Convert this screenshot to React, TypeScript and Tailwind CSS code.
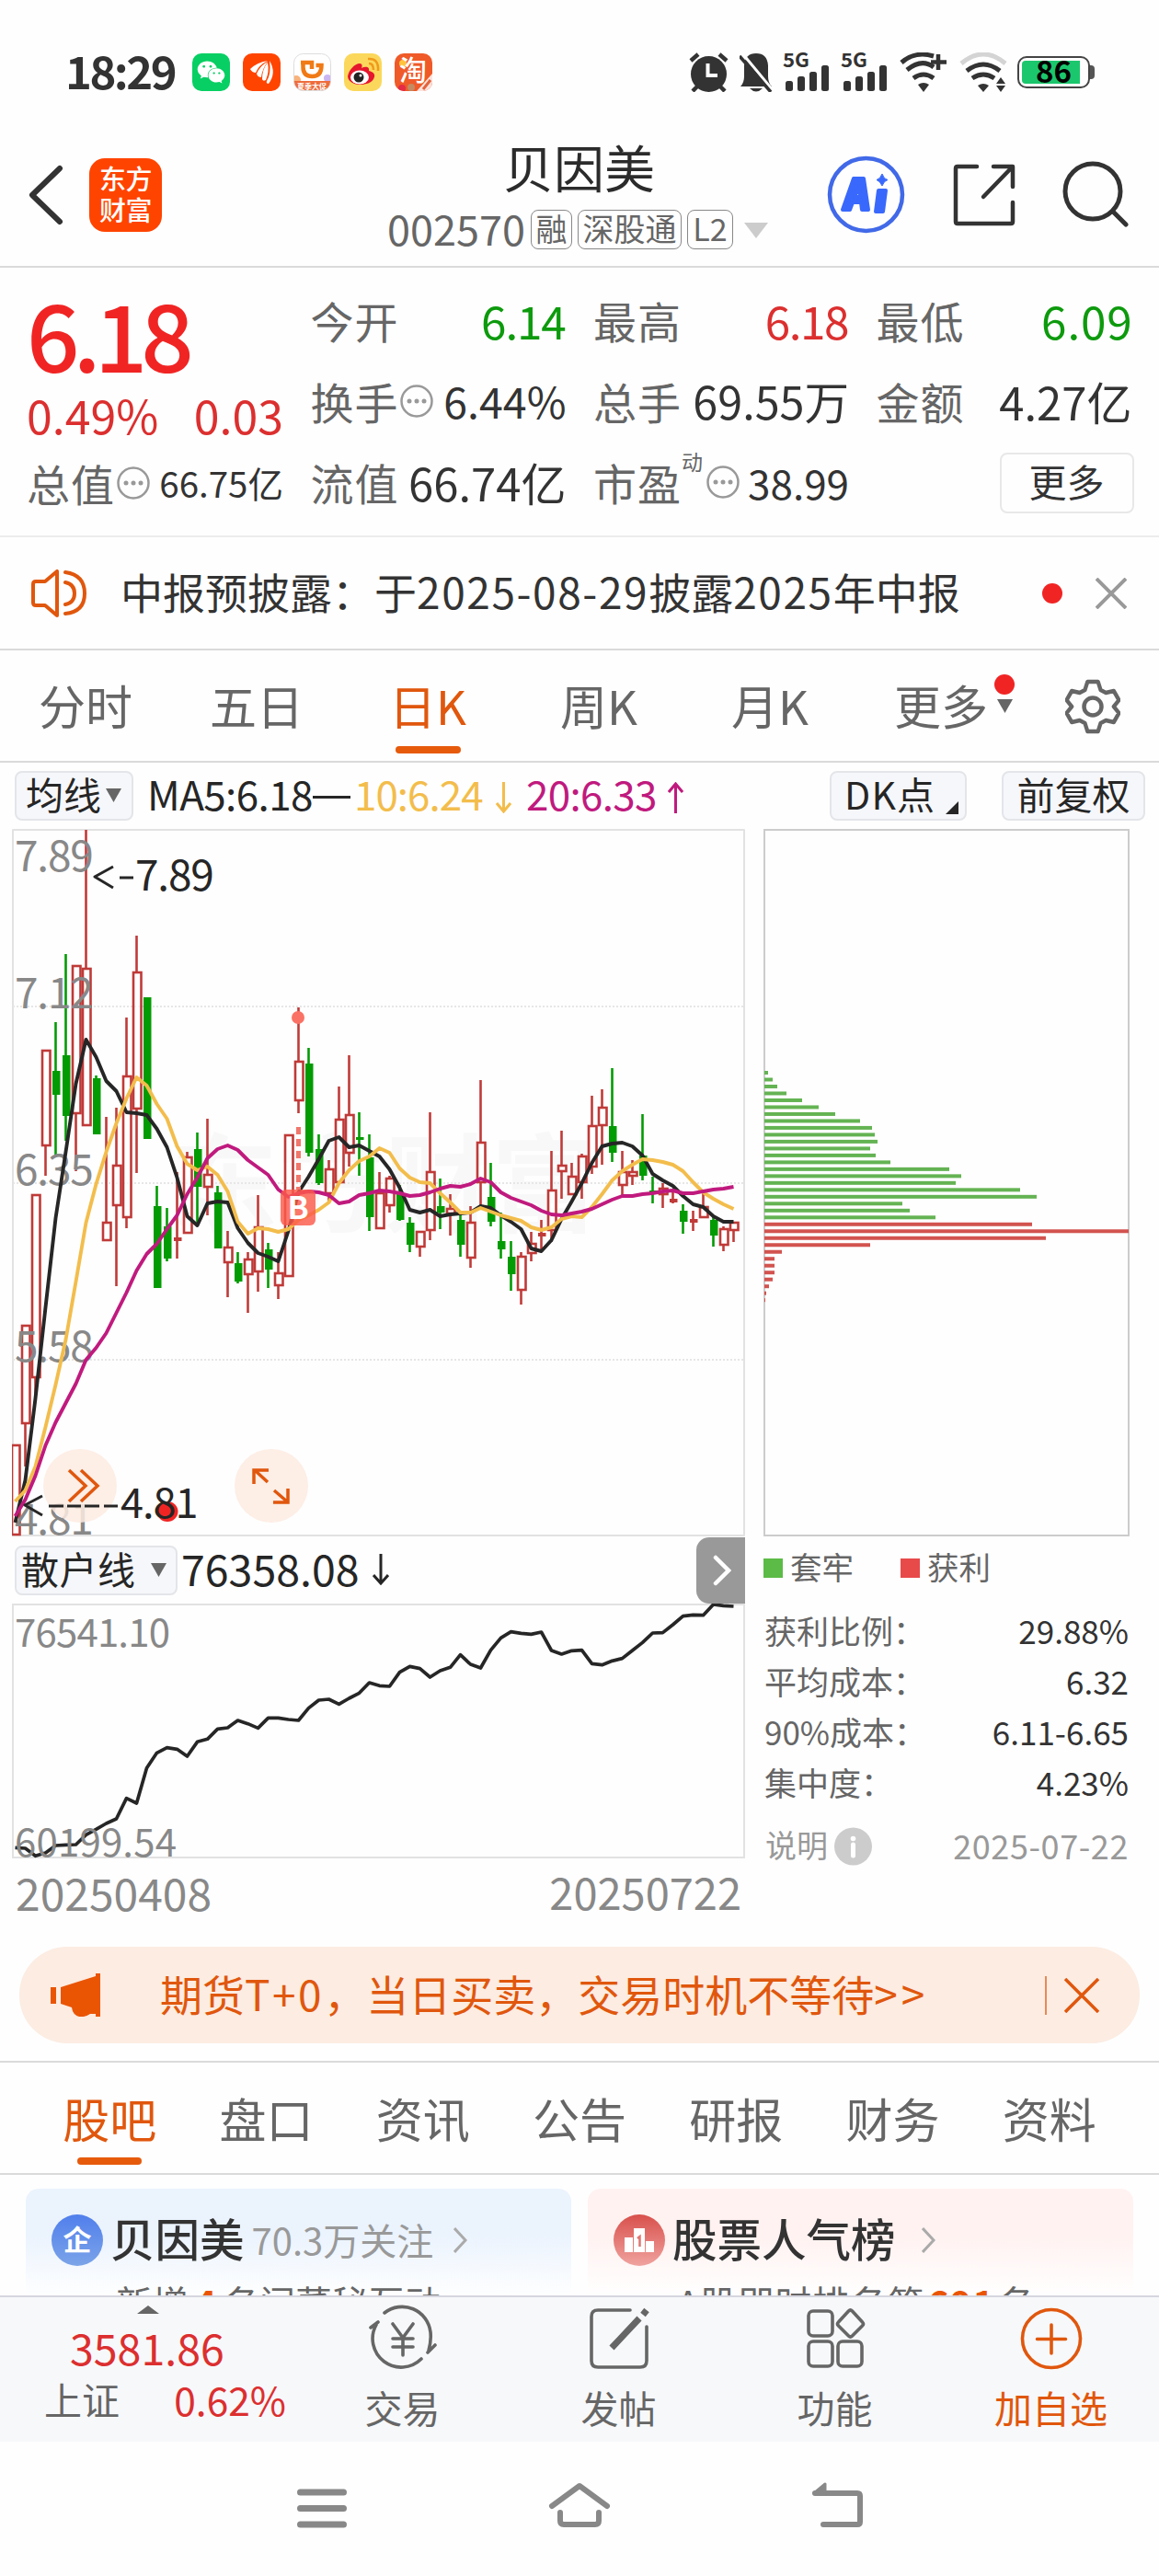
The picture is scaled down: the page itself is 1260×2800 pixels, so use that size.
import React from "react";
import { FaWeixin } from "react-icons/fa";

const UP = "#bf3a38";
const DOWN = "#039b03";

// [high, body top, body bottom, low, rising]
const candles: [number, number, number, number, number][] = [
    [1570, 1570, 1669, 1669, 1],
    [1440, 1440, 1548, 1594, 1],
    [1298, 1298, 1498, 1520, 1],
    [1141, 1141, 1246, 1278, 1],
    [1111, 1164, 1190, 1255, 0],
    [1037, 1147, 1213, 1240, 0],
    [1049, 1049, 1211, 1273, 1],
    [902, 1052, 1224, 1224, 1],
    [1169, 1172, 1233, 1233, 0],
    [1214, 1328, 1349, 1349, 1],
    [1204, 1266, 1311, 1398, 1],
    [1106, 1169, 1324, 1335, 1],
    [1017, 1056, 1206, 1275, 1],
    [1084, 1084, 1238, 1238, 0],
    [1289, 1311, 1400, 1400, 0],
    [1313, 1333, 1368, 1371, 0],
    [1274, 1345, 1349, 1368, 1],
    [1252, 1257, 1341, 1341, 1],
    [1231, 1249, 1290, 1329, 0],
    [1216, 1276, 1291, 1321, 1],
    [1289, 1296, 1357, 1357, 0],
    [1338, 1355, 1373, 1410, 1],
    [1361, 1373, 1393, 1395, 0],
    [1361, 1368, 1386, 1427, 1],
    [1299, 1333, 1383, 1404, 1],
    [1351, 1358, 1380, 1400, 0],
    [1361, 1383, 1398, 1412, 1],
    [1233, 1233, 1388, 1388, 1],
    [1095, 1153, 1197, 1210, 1],
    [1139, 1156, 1253, 1257, 0],
    [1233, 1249, 1286, 1288, 0],
    [1261, 1270, 1298, 1306, 1],
    [1181, 1216, 1286, 1286, 1],
    [1147, 1211, 1254, 1268, 1],
    [1209, 1236, 1239, 1278, 0],
    [1233, 1258, 1323, 1338, 0],
    [1274, 1296, 1336, 1336, 1],
    [1278, 1280, 1311, 1318, 1],
    [1288, 1298, 1326, 1327, 0],
    [1323, 1329, 1353, 1361, 0],
    [1338, 1338, 1356, 1366, 1],
    [1209, 1273, 1338, 1348, 1],
    [1281, 1311, 1318, 1336, 0],
    [1298, 1313, 1320, 1343, 1],
    [1318, 1326, 1353, 1366, 0],
    [1311, 1328, 1368, 1378, 1],
    [1174, 1241, 1286, 1311, 1],
    [1264, 1301, 1328, 1333, 0],
    [1318, 1349, 1358, 1368, 0],
    [1349, 1366, 1385, 1403, 0],
    [1361, 1365, 1403, 1418, 1],
    [1339, 1351, 1363, 1371, 1],
    [1326, 1340, 1344, 1358, 1],
    [1251, 1293, 1338, 1350, 1],
    [1229, 1266, 1274, 1303, 1],
    [1264, 1278, 1299, 1299, 1],
    [1254, 1256, 1286, 1303, 1],
    [1191, 1223, 1269, 1276, 1],
    [1184, 1203, 1224, 1266, 1],
    [1161, 1224, 1253, 1263, 0],
    [1251, 1273, 1289, 1300, 1],
    [1261, 1273, 1279, 1288, 1],
    [1211, 1256, 1278, 1283, 0],
    [1279, 1294, 1297, 1308, 0],
    [1286, 1291, 1299, 1313, 1],
    [1295, 1303, 1307, 1308, 1],
    [1309, 1316, 1328, 1341, 0],
    [1316, 1325, 1329, 1338, 1],
    [1296, 1311, 1324, 1324, 1],
    [1322, 1326, 1343, 1355, 0],
    [1333, 1335, 1354, 1360, 1],
    [1328, 1328, 1338, 1350, 1],
];

const ma5 = [
    1655, 1609, 1520, 1421, 1324, 1252, 1178, 1130, 1149, 1175, 1186, 1209, 1210, 1212, 1227, 1247, 1280, 1322,
    1332, 1308, 1306, 1307, 1335, 1351, 1362, 1366, 1371, 1338, 1296, 1279, 1260, 1240, 1236, 1247, 1245, 1251,
    1257, 1271, 1291, 1315, 1318, 1315, 1322, 1320, 1319, 1318, 1311, 1313, 1321, 1328, 1336, 1357, 1360, 1348,
    1325, 1306, 1286, 1264, 1246, 1243, 1242, 1246, 1256, 1276, 1283, 1289, 1300, 1309, 1312, 1322, 1328, 1328,
];

const ma10 = [
    1632, 1620, 1594, 1551, 1505, 1456, 1393, 1329, 1287, 1252, 1221, 1194, 1171, 1180, 1200, 1216, 1246, 1265,
    1272, 1268, 1277, 1295, 1328, 1341, 1335, 1336, 1339, 1336, 1326, 1321, 1315, 1307, 1286, 1272, 1262, 1257,
    1248, 1253, 1270, 1280, 1285, 1286, 1297, 1307, 1318, 1318, 1313, 1317, 1321, 1324, 1327, 1334, 1337, 1334,
    1325, 1322, 1323, 1312, 1298, 1283, 1273, 1266, 1260, 1261, 1263, 1266, 1273, 1285, 1296, 1303, 1309, 1314,
];

const ma20 = [
    1648, 1630, 1604, 1571, 1546, 1525, 1504, 1478, 1465, 1449, 1427, 1405, 1381, 1363, 1352, 1336, 1321, 1298,
    1280, 1259, 1249, 1245, 1250, 1261, 1269, 1277, 1293, 1301, 1297, 1295, 1296, 1299, 1308, 1306, 1299, 1297,
    1294, 1295, 1297, 1300, 1299, 1296, 1292, 1289, 1290, 1287, 1281, 1285, 1296, 1302, 1306, 1310, 1316, 1320,
    1321, 1319, 1317, 1314, 1309, 1304, 1300, 1300, 1298, 1297, 1295, 1294, 1297, 1297, 1295, 1293, 1292, 1290,
];

const retail = [
    796, 798, 823, 813, 789, 787, 786, 754, 736, 717, 702, 635, 651, 536, 487, 470, 475, 498, 451, 442, 409, 405,
    381, 392, 406, 373, 373, 378, 381, 341, 315, 312, 328, 309, 292, 258, 268, 270, 224, 205, 212, 240, 219, 208,
    167, 198, 210, 152, 112, 92, 97, 100, 93, 153, 165, 154, 152, 196, 200, 187, 179, 153, 127, 96, 95, 69, 41, 37,
    38, 3, 7, 9,
];

const chips = [
    4, 9, 14, 24, 41, 59, 77, 104, 117, 120, 123, 115, 121, 137, 201, 214, 208, 278, 296, 150, 158, 186, 291, 396,
    306, 115, 19, 11, 11, 11, 9, 5, 2, 1,
];

const px = (i: number) => 16.5 + i * 11;
const line = (ys: number[]) => ys.map((y, i) => `${px(i)},${y}`).join(" ");

const Triangle = ({ className }: { className?: string }) => (
    <svg viewBox="0 0 16 14" preserveAspectRatio="none" className={className} fill="currentColor">
        <path d="M0 0h16L8 14z" />
    </svg>
);

const Signal = () => (
    <svg width="50" height="42" viewBox="0 0 50 42" className="mr-[13px] overflow-visible" fill="#333">
        <text x="-1" y="16" fontSize="21" fontWeight="700" textLength="29" lengthAdjust="spacingAndGlyphs">
            5G
        </text>
        <rect x="2" y="31" width="8" height="11" rx="2.5" />
        <rect x="15" y="26" width="8" height="16" rx="2.5" />
        <rect x="28" y="21" width="8" height="21" rx="2.5" />
        <rect x="41" y="14" width="8" height="28" rx="2.5" />
    </svg>
);

const StatusBar = () => (
    <div className="flex h-[156px] items-center pr-[70px] pl-[71px]">
        <span className="w-[138px] pb-[5px] text-[49px] leading-none font-bold tracking-[-2.500px] text-[#333]">18:29</span>
        <div className="flex gap-[13.9px]">
            <div className="flex size-[41px] items-center justify-center rounded-[10px] bg-[#07cf63] text-white">
                <FaWeixin size={31} />
            </div>
            <div className="flex size-[41px] items-center justify-center rounded-[10px] bg-[#ff4400]">
                <svg width="41" height="41" viewBox="0 0 41 41" fill="#fff">
                    <path d="M8 17q7-7 19-9-10 5-13 13-4 0-6-4z" />
                    <path d="M15 22q4-9 12-13-6 8-7 17-4 0-5-4z" />
                    <path d="M21 28q0-11 6-18 2 10-2 19-3 2-4-1z" />
                    <path d="M29 8q8 13-1 25-3 0-2-3 5-8 3-22z" />
                </svg>
            </div>
            <svg width="41" height="41" viewBox="0 0 41 41">
                <defs>
                    <clipPath id="didi">
                        <rect x="0.5" y="0.5" width="40" height="40" rx="10" />
                    </clipPath>
                </defs>
                <g clipPath="url(#didi)">
                    <rect width="41" height="41" fill="#fff" />
                    <circle cx="3" cy="29" r="5" fill="#f9b27a" />
                    <circle cx="37" cy="27" r="4" fill="#c9b6f2" />
                    <rect y="30" width="41" height="11" fill="#ee6c3c" />
                    <path d="M8 10h12v7M10.500 10v5q0 10 10 10t10-12h-6" fill="none" stroke="#f07a16" strokeWidth="4.500" />
                    <text x="4" y="39" fontSize="8" fontWeight="700" fill="#fff">
                        夏季大促
                    </text>
                </g>
                <rect x="0.5" y="0.500" width="40" height="40" rx="10" fill="none" stroke="#ddd" />
            </svg>
            <svg width="41" height="41" viewBox="0 0 41 41">
                <rect width="41" height="41" rx="10" fill="#fbd85c" />
                <path d="M4 25C5 18 12 11 17 11c3 0 3 3 2 5 4-2 9-2 8 3 5 1 8 4 5 9-4 8-27 9-28-3z" fill="#e6162d" />
                <ellipse cx="17" cy="26" rx="10" ry="7.500" fill="#fff" />
                <circle cx="16" cy="26" r="5.500" fill="#222" />
                <circle cx="18" cy="24" r="1.500" fill="#fff" />
                <path d="M27 11q5 0 5 7M26 6q12-1 11 13" fill="none" stroke="#f09a1a" strokeWidth="2.600" />
            </svg>
            <svg width="41" height="41" viewBox="0 0 41 41">
                <defs>
                    <clipPath id="taobao">
                        <rect width="41" height="41" rx="10" />
                    </clipPath>
                </defs>
                <g clipPath="url(#taobao)">
                    <rect width="41" height="41" fill="#ef5a28" />
                    <circle cx="9" cy="11" r="4" fill="#ffc43d" />
                    <text x="5" y="29" fontSize="30" fontWeight="500" fill="#fff">
                        淘
                    </text>
                    <path d="M24 41 41 22v19z" fill="#fbe3dd" />
                    <circle cx="8" cy="38" r="4" fill="#e52b45" />
                    <circle cx="18" cy="37" r="4" fill="#c48a62" />
                    <path d="m31 39 8-10" stroke="#e2643c" strokeWidth="3" />
                </g>
            </svg>
        </div>
        <div className="ml-auto flex items-center">
            <svg width="43" height="43" viewBox="0 0 43 43" className="mr-[12px]">
                <path d="m2 9 8-7M41 9l-8-7M10 36l-6 6M33 36l6 6" stroke="#333" strokeWidth="4.500" />
                <ellipse cx="21.500" cy="23.500" rx="19.500" ry="19.500" fill="#333" />
                <path d="M20.500 12v13H31" fill="none" stroke="#fff" strokeWidth="4" />
            </svg>
            <svg width="36" height="43" viewBox="0 0 36 43" className="mr-[12px]">
                <path d="M1 37q4-4 4-11V14Q6 1 18 1t13 13v12q0 7 4 11zM11 39h14q-7 7-14 0z" fill="#333" />
                <path d="m3 1 34 41" stroke="#fff" strokeWidth="3" />
                <path d="m0 4 34 39" stroke="#333" strokeWidth="3.500" />
            </svg>
            <Signal />
            <Signal />
            <svg width="52" height="43" viewBox="0 0 52 43" className="mr-[13px]" fill="none" stroke="#333" strokeWidth="5">
                <path d="M2 11Q17-2 37 4M8 19q16-13 29-3M15 28q11-8 22 0" />
                <path d="M42 2v17M34 10.500h17" strokeWidth="4.500" />
                <path d="M20 35q6-4 12 0l-6 8z" fill="#333" stroke="none" />
            </svg>
            <svg width="52" height="43" viewBox="0 0 52 43" className="mr-[11px]" fill="none" stroke="#333" strokeWidth="5">
                <path d="M2 12Q26-8 50 12" stroke="#d4d4d4" />
                <path d="M8 20q18-14 36 0M14 28q12-8 24 0" />
                <path d="M20 36q6-4 12 0l-6 7z" fill="#333" stroke="none" />
                <path d="m45 27 5 7H40zM45 43l5-7H40z" fill="#333" stroke="none" />
            </svg>
            <div className="relative flex h-[35px] w-[79px] items-center rounded-[10px] border-2 border-[#444] p-[3px]">
                <div className="h-full w-[63px] rounded-l-[4px] bg-[#1bc76d]" />
                <span className="absolute inset-x-0 -top-[3px] text-center text-[33px] leading-none font-bold text-black">86</span>
            </div>
            <div className="h-[15px] w-[5px] rounded-r bg-[#555]" />
        </div>
    </div>
);

const Header = () => (
    <header className="flex h-[135px] items-start border-b-2 border-[#dadada] pl-[31px]">
        <svg width="38" height="66" viewBox="0 0 38 66" className="mt-[23px] mr-[28px]" fill="none" stroke="#333" strokeWidth="6" strokeLinecap="round">
            <path d="M34 4 4 33l30 29" strokeLinejoin="round" />
        </svg>
        <div className="mt-[16px] flex h-[80px] w-[79px] flex-col items-center justify-center rounded-[17px] bg-[#ff4400] pb-[5px] text-[29px] leading-[34px] font-medium tracking-[-0.5px] text-white">
            <span>东方</span>
            <span>财富</span>
        </div>
        <div className="ml-[245px] w-[415px]">
            <div className="mt-[-5px] pl-[2px] text-center text-[55px] leading-[58px] text-[#2b2b2b]">贝因美</div>
            <div className="mt-[16px] flex items-center text-[#666]">
                <span className="w-[156px] pb-[3px] text-[45px] leading-[46px]">002570</span>
                <div className="flex gap-[6px] text-[34px] leading-[37px]">
                    <span className="h-[43px] w-[45px] rounded-[8px] border-[1.500px] border-[#888] text-center">融</span>
                    <span className="h-[43px] w-[113px] rounded-[8px] border-[1.500px] border-[#888] text-center">深股通</span>
                    <span className="h-[43px] w-[50px] rounded-[8px] border-[1.500px] border-[#888] text-center">L2</span>
                </div>
                <Triangle className="mt-[1px] ml-[12px] h-[17px] w-[26px] text-[#ccc]" />
            </div>
        </div>
        <svg width="86" height="86" viewBox="0 0 86 86" className="mt-[13px] ml-[63px]">
            <circle cx="42.500" cy="42.500" r="39.500" fill="none" stroke="#4169e8" strokeWidth="4.500" />
            <path d="M17 59 29 25h11l5 34h-7l-1-8h-9l-3 8zm13-14h6l-1-12zM56 38h8l-3 23h-8z" fill="#3968fc" fillRule="evenodd" stroke="#3968fc" strokeWidth="4" strokeLinejoin="round" />
            <path d="M60 20q2 6 6 6.500-4 1-6 6.500-2-5-6-6.500 4-1 6-6.500z" fill="#3968fc" stroke="#3968fc" />
        </svg>
        <svg width="70" height="70" viewBox="0 0 70 70" className="mt-[21px] ml-[51px]" fill="none" stroke="#333" strokeWidth="4.500" strokeLinecap="round" strokeLinejoin="round">
            <path d="M26 4H5q-2 0-2 2v58q0 2 2 2h58q2 0 2-2V43M44 4h21v22M64 5 33 37" />
        </svg>
        <svg width="72" height="72" viewBox="0 0 72 72" className="mt-[19px] ml-[49px]" fill="none" stroke="#333" strokeWidth="5" strokeLinecap="round">
            <circle cx="33" cy="33" r="30" />
            <path d="m56 56 13 13" />
        </svg>
    </header>
);

const Dots = ({ className }: { className?: string }) => (
    <svg width="36" height="36" viewBox="0 0 36 36" className={className}>
        <circle cx="18" cy="18" r="16.500" fill="none" stroke="#999" strokeWidth="2.500" />
        <circle cx="10" cy="18" r="2.500" fill="#999" />
        <circle cx="18" cy="18" r="2.500" fill="#999" />
        <circle cx="26" cy="18" r="2.500" fill="#999" />
    </svg>
);

const Cell = ({ label, value, extra, className }: { label: string; value: string; extra?: React.ReactNode; className?: string }) => (
    <div className="flex h-[88px] items-center pb-[5px] whitespace-nowrap text-[#666]">
        <span className="text-[47px] leading-none tracking-[1px]">{label}</span>
        {extra}
        <span className={"ml-auto leading-none " + className}>{value}</span>
    </div>
);

const Quote = () => (
    <section className="grid h-[293px] grid-cols-[279px_278px_278px_278px] gap-x-[29.500px] border-b-2 border-[#ececec] pt-[15px] pl-[29px] text-[#666]">
        <div>
            <div className="h-[120px] pt-[3px] text-[101px] leading-[104px] font-medium tracking-[-7px] text-[#f12424]">6.18</div>
            <div className="flex h-[57px] items-center justify-between pb-[10px] text-[50px] leading-none text-[#dc2f2f]">
                <span>0.49%</span>
                <span>0.03</span>
            </div>
            <Cell label="总值" value="66.75亿" extra={<Dots className="ml-[2px]" />} className="text-[38.500px] text-[#333]" />
        </div>
        <div>
            <Cell label="今开" value="6.14" className="mr-[1px] text-[49.500px] tracking-[-1.200px] text-[#0d9a0d]" />
            <Cell label="换手" value="6.44%" extra={<Dots className="ml-[1px]" />} className="text-[46.500px] text-[#333]" />
            <Cell label="流值" value="66.74亿" className="text-[49px] text-[#333]" />
        </div>
        <div>
            <Cell label="最高" value="6.18" className="mr-[1px] text-[49.500px] tracking-[-1.500px] text-[#dc2f2f]" />
            <Cell label="总手" value="69.55万" className="text-[48.500px] text-[#333]" />
            <Cell
                label="市盈"
                value="38.99"
                extra={
                    <>
                        <span className="mb-[44px] text-[23px] leading-none">动</span>
                        <Dots className="ml-[4px]" />
                    </>
                }
                className="text-[44px] text-[#333]"
            />
        </div>
        <div>
            <Cell label="最低" value="6.09" className="-mr-[1px] text-[49.500px] tracking-[0.800px] text-[#0d9a0d]" />
            <Cell label="金额" value="4.27亿" className="text-[49px] text-[#333]" />
            <div className="mt-[10px] ml-[134px] h-[66px] w-[146px] rounded-[8px] border-2 border-[#e8e8e8] text-center text-[41px] leading-[56px] text-[#333]">更多</div>
        </div>
    </section>
);

const Notice = () => (
    <section className="flex h-[123px] items-center border-b-2 border-[#dadada] pl-[33px]">
        <svg width="62" height="52" viewBox="0 0 62 52" fill="none" stroke="#e0570d" strokeWidth="4" strokeLinecap="round" strokeLinejoin="round">
            <path d="M29 2v48L16 39H6q-3 0-3-3V16q0-3 3-3h10zM38 14q10 2 10 12T38 38M38 3q21 3 21 23T38 48" />
        </svg>
        <span className="ml-[36px] w-[980px] pb-[5px] text-[46px] leading-none whitespace-nowrap text-[#333]">
            中报预披露：于<span className="tracking-[1.600px]">2025-08-29</span>披露<span className="tracking-[1.600px]">2025</span>年中报
        </span>
        <span className="ml-[22px] size-[22px] rounded-full bg-[#f12424]" />
        <svg width="34" height="34" viewBox="0 0 34 34" className="ml-[36px]" stroke="#999" strokeWidth="4">
            <path d="m1 1 32 32M33 1 1 33" />
        </svg>
    </section>
);

const PeriodTabs = () => (
    <nav className="flex h-[122px] border-b-2 border-[#dadada] text-[51px] leading-none text-[#666]">
        {["分时", "五日", "日K", "周K", "月K", "更多"].map((t) => (
            <div key={t} className="relative flex w-[186px] flex-col items-center pt-[34px]">
                <span className={t === "日K" ? "text-[#e0570d]" : ""}>{t}</span>
                {t === "日K" && <span className="mt-[19px] h-[8px] w-[71px] rounded bg-[#e65a0c]" />}
                {t === "更多" && (
                    <>
                        <span className="absolute top-[26px] right-[13px] size-[22px] rounded-full bg-[#f12424]" />
                        <Triangle className="absolute top-[53px] right-[15px] h-[15px] w-[17px]" />
                    </>
                )}
            </div>
        ))}
        <svg width="60" height="60" viewBox="0 0 60 60" className="mt-[31px] ml-[42px]" fill="none" stroke="#666" strokeWidth="4.500" strokeLinejoin="round">
            <path d="M24 3h12l3 9 6 3 9-2 6 10-6 7 6 7-6 10-9-2-6 3-3 9H24l-3-9-6-3-9 2L0 37l6-7-6-7 6-10 9 2 6-3z" transform="translate(1.500 0) scale(.95 1)" />
            <circle cx="30" cy="30" r="9.500" />
        </svg>
    </nav>
);

const Toolbar = () => (
    <div className="flex h-[72px] items-start pt-[9px] pl-[16px] text-[41px] leading-[44px] whitespace-nowrap text-[#262626]">
        <div className="flex h-[54px] w-[129px] rounded-[8px] border-2 border-[#e3e5e9] bg-[#f6f7fa] pl-[10px]">
            <span className="w-[83px]">均线</span>
            <Triangle className="mt-[17px] ml-[4px] h-[15px] w-[17px] text-[#666]" />
        </div>
        <span className="ml-[15px] w-[225px] pt-[2px] text-[44px] tracking-[-0.600px]">
            MA5:6.18<span className="inline-block h-[3px] w-[41px] -translate-y-[13px] bg-[#262626]" />
        </span>
        <span className="w-[187px] pt-[2px] text-[44px] tracking-[-1px] text-[#f3bd4c]">
            10:6.24
            <svg width="17" height="34" viewBox="0 0 17 34" className="ml-[14px] inline -translate-y-[2px]" fill="none" stroke="currentColor" strokeWidth="3">
                <path d="M8.500 0v31M1 23l7.500 9L16 23" />
            </svg>
        </span>
        <span className="w-[330px] pt-[2px] text-[44px] tracking-[-0.700px] text-[#c01a7e]">
            20:6.33
            <svg width="17" height="34" viewBox="0 0 17 34" className="ml-[12px] inline -translate-y-[2px]" fill="none" stroke="currentColor" strokeWidth="3">
                <path d="M8.500 34V3M1 11l7.500-9L16 11" />
            </svg>
        </span>
        <div className="flex h-[54px] w-[149px] rounded-[8px] border-2 border-[#e3e5e9] bg-[#f6f7fa] pl-[14px]">
            <span className="w-[110px] tracking-[1.200px]">DK点</span>
            <svg width="14" height="14" viewBox="0 0 14 14" className="mt-[31px]">
                <path d="M14 0v14H0z" fill="#262626" />
            </svg>
        </div>
        <div className="ml-[38px] h-[54px] w-[156px] rounded-[8px] border-2 border-[#e3e5e9] bg-[#f6f7fa] text-center">前复权</div>
    </div>
);

const KChart = () => (
    <svg width="797" height="769" viewBox="13 901 797 769" className="block" strokeLinejoin="round">
        <text x="186" y="1330" fontSize="116" fontWeight="700" fill="#f8f8f8">
            东方财富
        </text>
        <rect x="14" y="902" width="795" height="767" fill="none" stroke="#e2e2e2" strokeWidth="2" />
        {[1094, 1286, 1478].map((y) => (
            <path key={y} d={`M14 ${y}H808`} stroke="#e6e6e6" strokeWidth="2" strokeDasharray="2 2" />
        ))}
        {candles.map(([h, t, b, l, up], i) => {
            const x = px(i);
            const c = up ? UP : DOWN;
            const solid = !up || b - t < 5;
            return (
                <g key={i} stroke={c} strokeWidth="2.600">
                    {t > h && <path d={`M${x} ${h}V${t}`} />}
                    {l > b && <path d={`M${x} ${b}V${l}`} />}
                    {solid ? (
                        <rect x={x - 3.5} y={t} width="8.500" height={b - t} fill={c} stroke="none" />
                    ) : (
                        <rect x={x - 3.5} y={t + 1} width="8.500" height={b - t - 2} fill="#fff" fillOpacity="0.600" strokeLinejoin="miter" />
                    )}
                </g>
            );
        })}
        <g fill="#888" fontSize="46" letterSpacing="-1.200">
            <text x="16" y="947">7.89</text>
            <text x="16" y="1096">7.12</text>
            <text x="16" y="1288">6.35</text>
            <text x="16" y="1480">5.58</text>
            <text x="16" y="1668">4.81</text>
        </g>
        <circle cx="87" cy="1615" r="40" fill="#fdebe2" fillOpacity="0.850" />
        <circle cx="295" cy="1615" r="40" fill="#fdeee6" />
        <path d="m75 1598 18 17-18 17M88 1598l18 17-18 17" fill="none" stroke="#e0570d" strokeWidth="3.500" strokeLinejoin="miter" />
        <path d="M276 1613v-15h16M278 1599l13 12M313 1618v15h-16M312 1632l-14-12" fill="none" stroke="#e0570d" strokeWidth="3.500" strokeLinejoin="miter" />
        <g fill="none" strokeWidth="3.900">
            <polyline points={line(ma5)} stroke="#262626" />
            <polyline points={line(ma10)} stroke="#f3bd4c" />
            <polyline points={line(ma20)} stroke="#c01a7e" />
        </g>
        <path d="M324.500 1225v68" stroke="#f0776c" strokeWidth="5" strokeDasharray="8 5" />
        <circle cx="324" cy="1106" r="7" fill="#fa7265" />
        <rect x="305" y="1293" width="38" height="39" rx="6" fill="#fb5a4b" fillOpacity="0.820" />
        <text x="324" y="1325" fontSize="34" fontWeight="700" fill="#fff" textAnchor="middle">
            B
        </text>
        <g fill="none" stroke="#262626" strokeWidth="3">
            <path d="m123 942-20 11 20 12M130 954h15M46 1626l-19 10 19 11M53 1637h16M73 1637h15M92 1637h16M113 1637h15" />
        </g>
        <text x="147" y="968" fontSize="46" letterSpacing="-1.200" fill="#262626">7.89</text>
        <ellipse cx="182" cy="1643" rx="11.500" ry="11" fill="#f12424" />
        <text x="131" y="1650" fontSize="45" letterSpacing="-1" fill="#262626">4.81</text>
    </svg>
);

const SubChart = () => (
    <svg width="797" height="277" viewBox="13 0 797 277" className="block">
        <rect x="14" y="1" width="795" height="275" fill="none" stroke="#e2e2e2" strokeWidth="2" />
        <polyline points={retail.map((v, i) => `${px(i)},${v / 3}`).join(" ")} fill="none" stroke="#262626" strokeWidth="3.700" strokeLinejoin="round" />
        <g fill="#888" fontSize="42">
            <text x="16" y="47" textLength="169">76541.10</text>
            <text x="16" y="275" textLength="176">60199.54</text>
        </g>
    </svg>
);

const costs = [
    ["获利比例：", "29.88%"],
    ["平均成本：", "6.32"],
    ["90%成本：", "6.11-6.65"],
    ["集中度：", "4.23%"],
];

const Charts = () => (
    <section className="flex h-[1215px] pl-[13px]">
        <div className="w-[797px]">
            <KChart />
            <div className="flex h-[73px] items-start text-[#262626]">
                <div className="mt-[10px] ml-[3px] flex h-[54px] w-[177px] rounded-[8px] border-2 border-[#e3e5e9] bg-[#f6f7fa] pl-[5px] text-[41px] leading-[44px]">
                    <span className="w-[126px] tracking-[0.500px]">散户线</span>
                    <Triangle className="mt-[17px] ml-[15px] h-[15px] w-[17px] text-[#666]" />
                </div>
                <span className="mt-[10px] ml-[4px] w-[208px] text-[46.500px] leading-[48px]">76358.08</span>
                <svg width="18" height="34" viewBox="0 0 18 34" className="mt-[19px]" fill="none" stroke="currentColor" strokeWidth="3">
                    <path d="M9 0v31M1 23l8 9 8-9" />
                </svg>
                <div className="mt-px ml-auto flex h-[72px] w-[53px] items-center justify-center rounded-l-[14px] bg-[#999]">
                    <svg width="20" height="34" viewBox="0 0 20 34" className="ml-[3px]" fill="none" stroke="#fff" strokeWidth="4.500" strokeLinecap="round">
                        <path d="m3 3 14 14L3 31" />
                    </svg>
                </div>
            </div>
            <SubChart />
            <div className="flex justify-between px-[4px] pt-[8px] text-[48px] leading-[56px] text-[#888]">
                <span>20250408</span>
                <span className="text-[47px]">20250722</span>
            </div>
        </div>
        <div className="ml-[20px] w-[398px]">
            <svg width="398" height="769" viewBox="830 901 398 769" className="block">
                <rect x="831" y="902" width="396" height="767" fill="none" stroke="#ccc" strokeWidth="2" />
                {chips.map((w, i) => (
                    <rect key={i} x="831" y={1164 + i * 7.49} width={w} height="4" fill={i < 22 ? "#64b353" : "#d2534f"} />
                ))}
            </svg>
            <div className="mt-[14px] flex h-[40px] items-center text-[34.500px] leading-none text-[#666]">
                <span className="mr-[8px] size-[21px] bg-[#5cbb46]" />
                <span className="mb-[4px]">套牢</span>
                <span className="mr-[8px] ml-[51px] size-[21px] bg-[#e84a4a]" />
                <span className="mb-[4px]">获利</span>
            </div>
            <div className="mt-[20px] text-[35px] leading-[55px] text-[#666]">
                {costs.map(([k, v]) => (
                    <div key={k} className="flex justify-between pr-[1px] pl-[1px]">
                        <span>{k}</span>
                        <span className="text-[#333]">{v}</span>
                    </div>
                ))}
            </div>
            <div className="mt-[20px] flex h-[45px] items-center pr-[1px] pl-[2px] text-[36px] leading-none text-[#999]">
                <span className="pb-[4px] text-[34px]">说明</span>
                <svg width="41" height="42" viewBox="0 0 41 42" className="ml-[7px]">
                    <circle cx="20.500" cy="21" r="20.500" fill="#ccc" />
                    <circle cx="20.500" cy="12.500" r="2.800" fill="#fff" />
                    <path d="M20.500 19v12" stroke="#fff" strokeWidth="5" strokeLinecap="round" />
                </svg>
                <span className="ml-auto pb-[4px] tracking-[0.600px]">2025-07-22</span>
            </div>
        </div>
    </section>
);

const Banner = () => (
    <div className="mx-[21px] flex h-[105px] items-center rounded-[52px] bg-[#fcece2] pl-[34px] text-[#e0570d]">
        <svg width="55" height="47" viewBox="0 0 55 47" fill="#ea5504">
            <path d="M0 15h6v18H0zM11 15 49 3V0h5v47h-5v-3H43q-6 4-12 3-7-2-8-10L11 33z" />
        </svg>
        <span className="ml-[64px] w-[962px] pb-[5px] text-[46px] leading-none whitespace-nowrap">
            期货<span className="tracking-[2.500px]">T+0</span>，当日买卖，交易时机不等待<span className="tracking-[4px]">&gt;&gt;</span>
        </span>
        <span className="h-[42px] w-[2px] bg-[#e58a57]" />
        <svg width="38" height="38" viewBox="0 0 38 38" className="ml-[19px]" stroke="currentColor" strokeWidth="3.500">
            <path d="m1 1 36 36M37 1 1 37" />
        </svg>
    </div>
);

const InfoTabs = () => (
    <nav className="mt-[19px] flex h-[124px] border-y-2 border-[#dadada] px-[34px] text-[51px] leading-none text-[#666]">
        {["股吧", "盘口", "资讯", "公告", "研报", "财务", "资料"].map((t, i) => (
            <div key={t} className={"flex w-[170.500px] flex-col items-center pt-[35px] " + (i ? "" : "text-[#e0570d]")}>
                <span>{t}</span>
                {!i && <span className="mt-[17px] h-[8px] w-[70px] rounded bg-[#e65a0c]" />}
            </div>
        ))}
    </nav>
);

const Chevron = ({ className }: { className?: string }) => (
    <svg width="15" height="28" viewBox="0 0 15 28" className={className} fill="none" stroke="#aaa" strokeWidth="3">
        <path d="m1 1 12 13L1 27" />
    </svg>
);

const Cards = () => (
    <section className="flex h-[131px] gap-[18px] overflow-hidden pt-[15px] pl-[28px] leading-none whitespace-nowrap text-[#666]">
        <div className="h-[170px] w-[593px] rounded-t-[14px] bg-linear-to-b from-[#ebf3fd] from-30% to-white to-70%">
            <div className="flex h-[102px] items-center pt-[9px] pl-[28px]">
                <svg width="56" height="56" viewBox="0 0 56 56">
                    <defs>
                        <linearGradient id="blue" x2="0" y2="1">
                            <stop stopColor="#517fec" />
                            <stop offset="1" stopColor="#7ba4e8" />
                        </linearGradient>
                    </defs>
                    <circle cx="28" cy="28" r="28" fill="url(#blue)" />
                    <text x="28" y="39" fontSize="31" fontWeight="700" fill="#fff" textAnchor="middle">企</text>
                </svg>
                <span className="ml-[8px] pb-[4px] text-[48.500px] font-medium text-[#333]">贝因美</span>
                <span className="ml-[8px] pb-[2px] text-[40px] text-[#999]">70.3万关注</span>
                <Chevron className="ml-[22px]" />
            </div>
            <div className="pt-[1px] pl-[98px] text-[39.500px]">
                新增<b className="px-[7px] text-[#ea5504]">4</b>名问董秘互动
            </div>
        </div>
        <div className="h-[170px] w-[593px] rounded-t-[14px] bg-linear-to-b from-[#fff2f1] from-30% to-white to-70%">
            <div className="flex h-[102px] items-center pt-[9px] pl-[28px]">
                <svg width="56" height="56" viewBox="0 0 56 56">
                    <defs>
                        <linearGradient id="red" x2="0" y2="1">
                            <stop stopColor="#d8504c" />
                            <stop offset="1" stopColor="#f0a39f" />
                        </linearGradient>
                    </defs>
                    <circle cx="28" cy="28" r="28" fill="url(#red)" />
                    <path d="M12 25h9v16h-9zM22 15h12v26H22zM35 29h9v12h-9z" fill="#fff" />
                    <path d="m26 26 2.500-2v11" fill="none" stroke="#e07571" strokeWidth="2.500" />
                </svg>
                <span className="ml-[8px] pb-[4px] text-[48.500px] font-medium text-[#333]">股票人气榜</span>
                <Chevron className="ml-[28px]" />
            </div>
            <div className="pt-[1px] pl-[97px] text-[39.500px] tracking-[1.200px]">
                A股即时排名第<b className="px-[3px] text-[#ea5504]">691</b>名
            </div>
        </div>
    </section>
);

const actions = [
    {
        name: "交易",
        icon: (
            <>
                <path d="M18 9a31 31 0 0 1 50 21q1 9-2 20M58 59A31 31 0 0 1 9 22M3 25l8-6M73 44l-8 8" />
                <path d="m27 21 11 15 11-15M38 36v19M27 37h22M27 46h22" />
            </>
        ),
    },
    {
        name: "发帖",
        icon: (
            <>
                <path d="M50 6H15q-7 0-7 7v48q0 7 7 7h46q7 0 7-7V24" />
                <path d="m68 6-4 5M60 15 30 47" strokeWidth="7" strokeLinecap="butt" />
            </>
        ),
    },
    {
        name: "功能",
        icon: (
            <>
                <rect x="9" y="7" width="26" height="27" rx="5" />
                <rect x="9" y="40" width="26" height="27" rx="5" />
                <rect x="41" y="40" width="26" height="27" rx="5" />
                <path d="M52.500 7q2-2 4 0l11 12q2 2 0 4l-11 11q-2 2-4 0l-11-11q-2-2 0-4z" />
            </>
        ),
    },
    {
        name: "加自选",
        icon: (
            <>
                <circle cx="38" cy="37" r="31.500" />
                <path d="M38 22v31M22.500 37.500h31" />
            </>
        ),
    },
];

const BottomBar = () => (
    <footer className="flex h-[159px] border-t-2 border-[#d5d6df] bg-[#f7f8fa] leading-none text-[#666]">
        <div className="w-[320px]">
            <Triangle className="mt-[9px] ml-[149px] h-[9px] w-[24px] rotate-180" />
            <div className="mt-[13px] pl-[76px] text-[46.500px] text-[#dc2f2f]">3581.86</div>
            <div className="mt-[12px] flex items-center justify-between pr-[9px] pl-[48px] text-[41px]">
                <span>上证</span>
                <span className="text-[42.500px] text-[#dc2f2f]">0.62%</span>
            </div>
        </div>
        {actions.map((a) => (
            <div key={a.name} className={"flex flex-1 flex-col items-center pt-[8px] " + (a.name === "加自选" ? "text-[#e0570d]" : "")}>
                <svg width="76" height="74" viewBox="0 0 76 74" fill="none" stroke="currentColor" strokeWidth="3.600" strokeLinecap="round" strokeLinejoin="round">
                    {a.icon}
                </svg>
                <span className="mt-[17px] text-[41px]">{a.name}</span>
            </div>
        ))}
    </footer>
);

const SystemNav = () => (
    <div className="flex h-[147px] items-start pt-[43px] pl-[323px]">
        <svg width="54" height="52" viewBox="0 0 54 52" stroke="#888" strokeWidth="7" strokeLinecap="round">
            <path d="M3.500 12h47M3.500 29.500h47M3.500 47h47" />
        </svg>
        <svg width="68" height="52" viewBox="0 0 68 52" className="ml-[219px]" fill="none" stroke="#888" strokeWidth="6" strokeLinecap="round" strokeLinejoin="round">
            <path d="M4 27 34 5l30 22M13 34v9q0 4 4 4h34q4 0 4-4v-9" />
        </svg>
        <svg width="60" height="52" viewBox="0 0 60 52" className="ml-[217px]" fill="none" stroke="#888" strokeWidth="6" strokeLinecap="round" strokeLinejoin="round">
            <path d="M5 13h46q3 0 3 3v28q0 3-3 3H14" />
            <path d="M16 3v10H4z" fill="#888" strokeWidth="3" />
        </svg>
    </div>
);

const App = () => {
    return (
        <div className="h-[2800px] w-[1260px] overflow-hidden bg-[#fefefe] font-['Noto_Sans_CJK_SC',sans-serif]">
            <StatusBar />
            <Header />
            <Quote />
            <Notice />
            <PeriodTabs />
            <Toolbar />
            <Charts />
            <Banner />
            <InfoTabs />
            <Cards />
            <BottomBar />
            <SystemNav />
        </div>
    );
};

export default App;
